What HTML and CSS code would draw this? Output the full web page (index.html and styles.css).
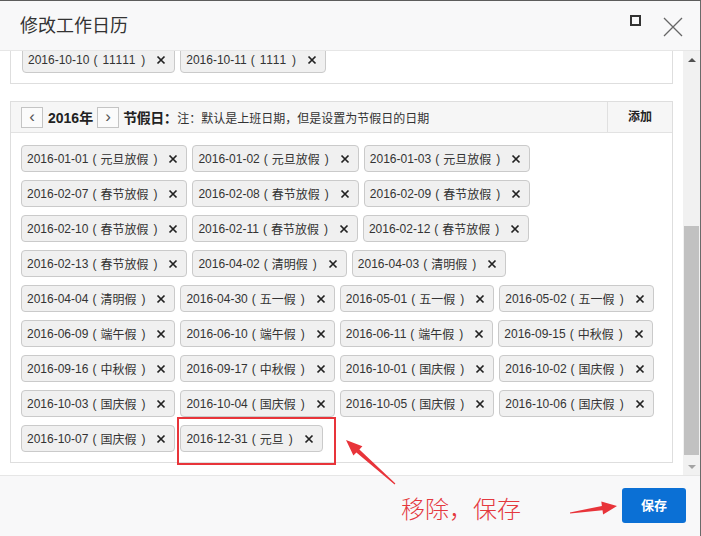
FILE: index.html
```html
<!DOCTYPE html>
<html lang="zh">
<head>
<meta charset="utf-8">
<title>修改工作日历</title>
<link rel="stylesheet" href="styles.css">
</head>
<body>
<div class="dialog">
  <div class="header">
    <div class="title">修改工作日历</div>
    <svg class="max-icon" width="11" height="11" viewBox="0 0 11 11"><rect x="1" y="1" width="9" height="9" fill="none" stroke="#333" stroke-width="2"/></svg>
    <svg class="close-icon" width="20" height="20" viewBox="0 0 20 20"><path d="M1 1 L19 19 M19 1 L1 19" stroke="#666" stroke-width="1.3" fill="none"/></svg>
  </div>
  <div class="body">
    <div class="viewport">
      <div class="content">
        <div class="panel panel-top">
          <div class="tags">
            <span class="tag"><span class="d">2016-10-10</span><span class="p">(</span><span class="n num">11111</span><span class="p">)</span><svg class="x" viewBox="0 0 10 10"><path d="M1.5 1.5 L8.5 8.5 M8.5 1.5 L1.5 8.5"/></svg></span>
            <span class="tag"><span class="d">2016-10-11</span><span class="p">(</span><span class="n num">1111</span><span class="p">)</span><svg class="x" viewBox="0 0 10 10"><path d="M1.5 1.5 L8.5 8.5 M8.5 1.5 L1.5 8.5"/></svg></span>
          </div>
        </div>
        <div class="panel panel-holiday">
          <div class="panel-head">
            <div class="head-left">
              <span class="nav-btn">&lsaquo;</span>
              <span class="year">2016年</span>
              <span class="nav-btn">&rsaquo;</span>
              <span class="label">节假日：</span>
              <span class="note">注：默认是上班日期，但是设置为节假日的日期</span>
            </div>
            <div class="add">添加</div>
          </div>
          <div class="tags" id="holidays"></div>
        </div>
      </div>
    </div>
    <div class="scrollbar">
      <div class="sb-btn"><span class="tri-up"></span></div>
      <div class="sb-track"><div class="sb-thumb"></div></div>
      <div class="sb-btn"><span class="tri-down"></span></div>
    </div>
  </div>
  <div class="footer">
    <button class="save">保存</button>
  </div>

  <div class="mark-box"></div>
  <div class="mark-text">移除，保存</div>
  <svg class="arrows" width="701" height="536" viewBox="0 0 701 536">
    <polygon fill="#e8343a" points="346,440 362.4,446.2 359.4,449.4 395.4,483.4 394.6,484.6 356.4,452.4 353.4,455.6"/>
    <polygon fill="#e8343a" points="617,506 601.3,501.6 601.9,506 569.9,512.4 570.1,513.6 602.5,510.2 603.1,514.6"/>
  </svg>
</div>
<script>
  var items = [
    ["2016-01-01","元旦放假"],["2016-01-02","元旦放假"],["2016-01-03","元旦放假"],
    ["2016-02-07","春节放假"],["2016-02-08","春节放假"],["2016-02-09","春节放假"],
    ["2016-02-10","春节放假"],["2016-02-11","春节放假"],["2016-02-12","春节放假"],
    ["2016-02-13","春节放假"],["2016-04-02","清明假"],["2016-04-03","清明假"],
    ["2016-04-04","清明假"],["2016-04-30","五一假"],["2016-05-01","五一假"],["2016-05-02","五一假"],
    ["2016-06-09","端午假"],["2016-06-10","端午假"],["2016-06-11","端午假"],["2016-09-15","中秋假"],
    ["2016-09-16","中秋假"],["2016-09-17","中秋假"],["2016-10-01","国庆假"],["2016-10-02","国庆假"],
    ["2016-10-03","国庆假"],["2016-10-04","国庆假"],["2016-10-05","国庆假"],["2016-10-06","国庆假"],
    ["2016-10-07","国庆假"],["2016-12-31","元旦"]
  ];
  var box = document.getElementById("holidays");
  var html = "";
  items.forEach(function (it) {
    html += '<span class="tag"><span class="d">' + it[0] + '</span><span class="p">(</span><span class="n">' + it[1] +
      '</span><span class="p">)</span><svg class="x" viewBox="0 0 10 10"><path d="M1.5 1.5 L8.5 8.5 M8.5 1.5 L1.5 8.5"/></svg></span>';
  });
  box.innerHTML = html;
</script>
</body>
</html>
```
FILE: styles.css
```css
* { box-sizing: border-box; }
html, body { margin: 0; padding: 0; }
body {
  width: 701px;
  height: 536px;
  overflow: hidden;
  background: #fff;
  font-family: "Liberation Sans", "Noto Sans CJK SC", sans-serif;
  color: #333;
}
.dialog {
  position: relative;
  width: 701px;
  height: 536px;
  display: flex;
  flex-direction: column;
  border-top: 1px solid #5c5c5c;
  border-right: 1px solid #6a6a6a;
  background: #fff;
}
.header {
  height: 50px;
  flex: none;
  display: flex;
  align-items: center;
  padding: 0 17px 0 20px;
  background: #f8f8f9;
  border-bottom: 1px solid #e6e6e6;
}
.title {
  font-family: "Noto Sans CJK SC", sans-serif;
  font-size: 18px;
  color: #333;
  flex: 1;
  margin-top: -3px;
}
.max-icon {
  align-self: flex-start;
  margin-top: 14px;
  margin-right: 22px;
}
.close-icon { margin-top: 3px; }

.body {
  flex: 1;
  display: flex;
  min-height: 0;
}
.viewport {
  flex: 1;
  overflow: hidden;
}
.content {
  margin-top: -16px;
  padding: 0 10px 0 10px;
}
.panel {
  border: 1px solid #dedede;
  background: #fff;
}
.panel-top {
  padding: 10px 10px 10px 11px;
  margin-bottom: 17px;
}
.tags {
  display: flex;
  flex-wrap: wrap;
  gap: 8px 5px;
}
.panel-holiday .tags {
  padding: 12px 10px 10px 10px;
}
.tag {
  display: inline-flex;
  align-items: center;
  height: 27px;
  padding: 0 8px 0 5px;
  border: 1px solid #cacaca;
  border-radius: 4px;
  background: #f0f0f0;
  font-size: 12px;
  color: #333;
  white-space: nowrap;
}
.tag .p {
  display: inline-block;
  width: 12px;
  text-align: center;
}
.tag .p:first-of-type { text-align: left; padding-left: 3px; }
.tag .p:last-of-type { text-align: right; padding-right: 3px; }
.tag .num {
  letter-spacing: 0.8px;
  padding-left: 1px;
}
.tag .x {
  width: 10px;
  height: 10px;
  margin-left: 8px;
  stroke: #222;
  stroke-width: 1.7;
  fill: none;
}
.panel-head {
  height: 31px;
  display: flex;
  align-items: stretch;
  background: #f6f6f6;
  border-bottom: 1px solid #e2e2e2;
}
.head-left {
  flex: 1;
  display: flex;
  align-items: center;
  padding-left: 10px;
}
.nav-btn {
  width: 22px;
  height: 21px;
  border: 1px solid #c4c4c4;
  background: #fbfbfb;
  display: inline-flex;
  align-items: center;
  justify-content: center;
  font-size: 17px;
  line-height: 1;
  color: #555;
  padding-bottom: 2px;
}
.year {
  font-size: 14px;
  font-weight: bold;
  margin: 0 4px 0 5px;
  color: #222;
}
.label {
  font-size: 14px;
  font-weight: bold;
  margin-left: 4px;
  color: #222;
  letter-spacing: -0.5px;
}
.note {
  font-size: 12px;
  color: #333;
}
.add {
  width: 65px;
  border-left: 1px solid #e0e0e0;
  display: flex;
  align-items: center;
  justify-content: center;
  font-size: 12px;
  font-weight: bold;
  color: #222;
  padding-bottom: 3px;
}
.panel-holiday { margin-bottom: 12px; }

.scrollbar {
  width: 17px;
  flex: none;
  display: flex;
  flex-direction: column;
  background: #f1f1f1;
}
.sb-btn {
  height: 17px;
  display: flex;
  align-items: center;
  justify-content: center;
}
.tri-up, .tri-down {
  width: 0; height: 0;
  border-left: 4px solid transparent;
  border-right: 4px solid transparent;
}
.tri-up { border-bottom: 4px solid #505050; }
.tri-down { border-top: 4px solid #a3a3a3; }
.sb-track { flex: 1; padding: 0 1px; }
.sb-thumb {
  margin-top: 158px;
  height: 229px;
  background: #c1c1c1;
}

.footer {
  height: 61px;
  flex: none;
  background: #f8f8f9;
  border-top: 1px solid #e6e6e6;
  display: flex;
  justify-content: flex-end;
  align-items: flex-start;
  padding: 12px 14px 0 0;
}
.save {
  width: 64px;
  height: 35px;
  border: none;
  border-radius: 3px;
  background: #0b70d5;
  color: #fff;
  font-family: "Noto Sans CJK SC", sans-serif;
  font-size: 13px;
  font-weight: bold;
  padding: 0 0 2px 0;
}

.mark-box {
  position: absolute;
  left: 177px;
  top: 416px;
  width: 159px;
  height: 48px;
  border: 2px solid #e8343a;
}
.mark-text {
  position: absolute;
  left: 401px;
  top: 489px;
  font-family: "Noto Sans CJK SC", sans-serif;
  font-weight: 300;
  font-size: 24px;
  color: #e4393f;
}
.arrows {
  position: absolute;
  left: 0;
  top: -1px;
  pointer-events: none;
}
```
